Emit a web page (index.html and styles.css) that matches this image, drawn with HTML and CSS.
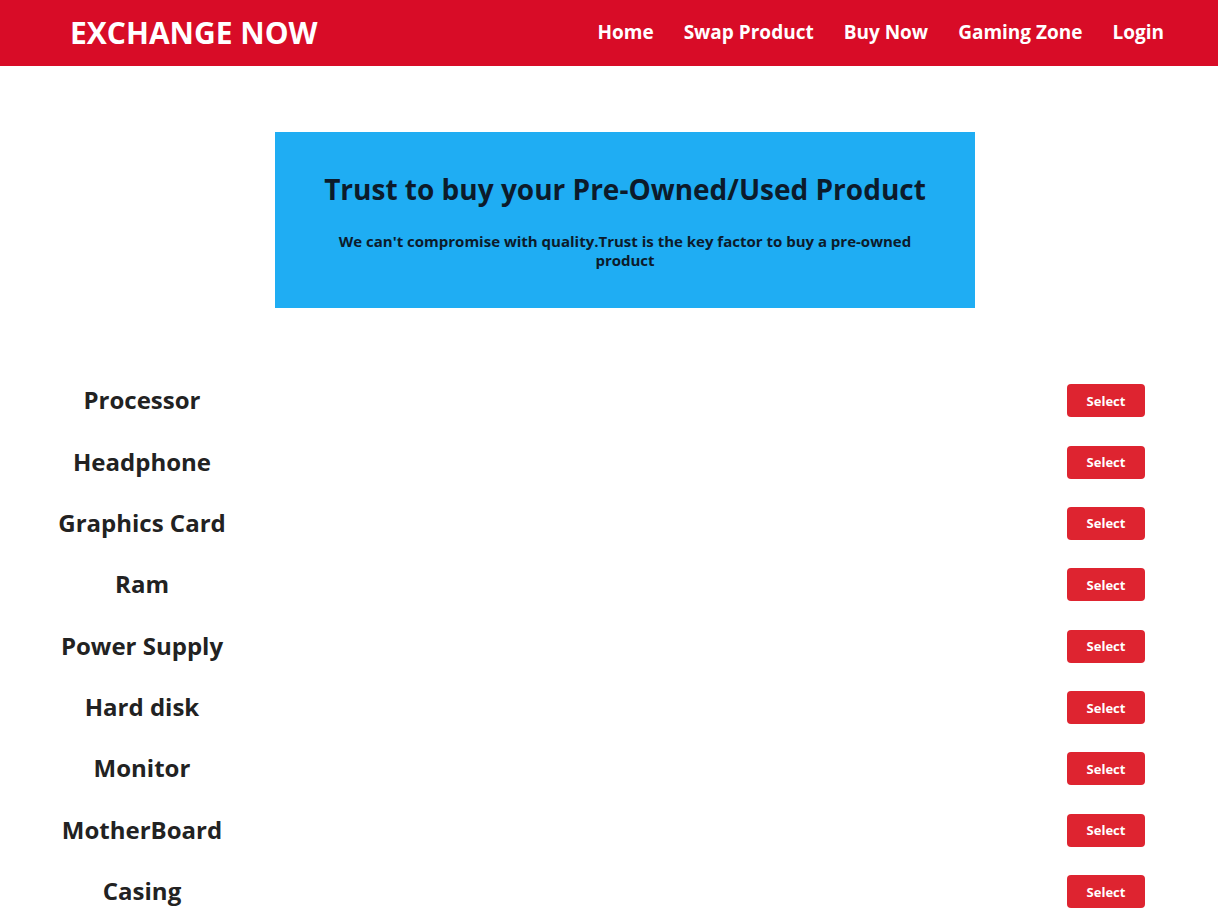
FILE: index.html
```html
<!DOCTYPE html>
<html lang="en">
<head>
<meta charset="utf-8">
<title>Exchange Now</title>
<link rel="stylesheet" href="styles.css">
</head>
<body>
<header class="navbar">
  <div class="brand">EXCHANGE NOW</div>
  <nav class="nav">
    <a href="#">Home</a>
    <a href="#">Swap Product</a>
    <a href="#">Buy Now</a>
    <a href="#">Gaming Zone</a>
    <a href="#">Login</a>
  </nav>
</header>
<section class="banner">
  <h1>Trust to buy your Pre-Owned/Used Product</h1>
  <p>We can't compromise with quality.Trust is the key factor to buy a pre-owned product</p>
</section>
<main class="list">
  <div class="row"><span class="label">Processor</span><button class="btn">Select</button></div>
  <div class="row"><span class="label">Headphone</span><button class="btn">Select</button></div>
  <div class="row"><span class="label">Graphics Card</span><button class="btn">Select</button></div>
  <div class="row"><span class="label">Ram</span><button class="btn">Select</button></div>
  <div class="row"><span class="label">Power Supply</span><button class="btn">Select</button></div>
  <div class="row"><span class="label">Hard disk</span><button class="btn">Select</button></div>
  <div class="row"><span class="label">Monitor</span><button class="btn">Select</button></div>
  <div class="row"><span class="label">MotherBoard</span><button class="btn">Select</button></div>
  <div class="row"><span class="label">Casing</span><button class="btn">Select</button></div>
</main>
</body>
</html>
```
FILE: styles.css
```css
* { box-sizing: border-box; }
body {
  margin: 0;
  font-family: "Open Sans", "Liberation Sans", sans-serif;
  background: #fff;
  color: #222;
}
.navbar {
  height: 66px;
  background: #d80c27;
  display: flex;
  align-items: center;
  justify-content: space-between;
  padding: 0 54px 0 70px;
}
.brand {
  color: #fff;
  font-weight: 700;
  font-size: 30px;
  line-height: 1;
}
.nav {
  display: flex;
  gap: 30px;
  padding-bottom: 1px;
}
.nav a {
  color: #fff;
  text-decoration: none;
  font-weight: 700;
  font-size: 19px;
  line-height: 1;
}
.banner {
  width: 700px;
  height: 176px;
  margin: 66px 0 0 275px;
  background: #1fadf3;
  text-align: center;
  padding: 38px 40px 0;
  color: #0c1b2b;
}
.banner h1 {
  margin: 0;
  font-size: 28px;
  font-weight: 700;
  line-height: 38px;
}
.banner p {
  margin: 24px 0 0;
  font-size: 15px;
  font-weight: 700;
  line-height: 19px;
}
.list {
  margin-top: 62px;
  padding-right: 73px;
}
.row {
  display: flex;
  align-items: center;
  justify-content: space-between;
  height: 61.375px;
}
.label {
  width: 284px;
  text-align: center;
  font-size: 24px;
  font-weight: 700;
  color: #222;
  margin-top: -2px;
}
.btn {
  width: 78px;
  height: 33px;
  border: none;
  border-radius: 4px;
  background: #de2430;
  color: #fff;
  font-family: inherit;
  font-weight: 700;
  font-size: 13px;
  padding: 0;
}
```
